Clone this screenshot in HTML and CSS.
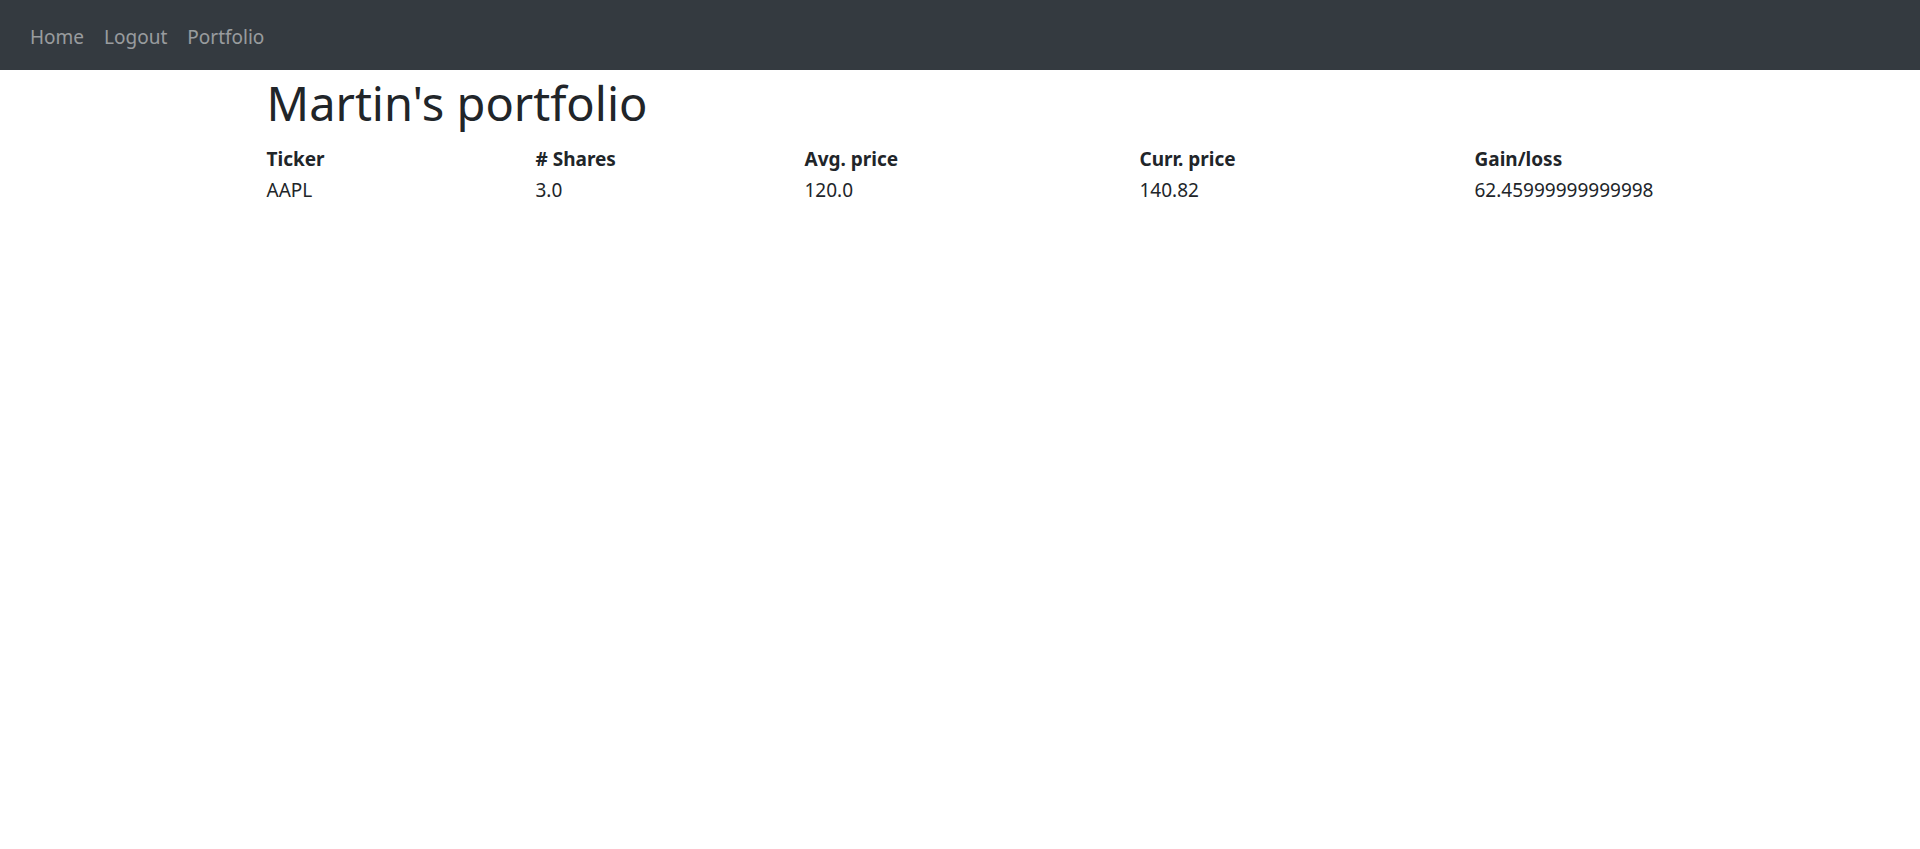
FILE: index.html
```html
<!DOCTYPE html>
<html lang="en">
<head>
<meta charset="utf-8">
<title>Martin's portfolio</title>
<link rel="stylesheet" href="styles.css">
</head>
<body>
<nav class="navbar">
  <a class="nav-link" href="#">Home</a>
  <a class="nav-link" href="#">Logout</a>
  <a class="nav-link" href="#">Portfolio</a>
</nav>
<main class="container">
  <h1 class="title">Martin's portfolio</h1>
  <div class="holdings">
    <div class="cell head">Ticker</div>
    <div class="cell head"># Shares</div>
    <div class="cell head">Avg. price</div>
    <div class="cell head">Curr. price</div>
    <div class="cell head">Gain/loss</div>
    <div class="cell">AAPL</div>
    <div class="cell">3.0</div>
    <div class="cell">120.0</div>
    <div class="cell">140.82</div>
    <div class="cell">62.45999999999998</div>
  </div>
</main>
</body>
</html>
```

FILE: styles.css
```css
html, body {
  margin: 0;
  padding: 0;
}
body {
  font-family: "Noto Sans", "Open Sans", sans-serif;
  color: #212529;
  background: #fff;
  font-size: 19px;
}
.navbar {
  height: 70px;
  background: #343a40;
  display: flex;
  align-items: center;
  padding: 3px 20px 0;
  box-sizing: border-box;
}
.nav-link {
  color: rgba(255, 255, 255, 0.5);
  text-decoration: none;
  padding: 0 10px;
  font-size: 19px;
  line-height: 30px;
}
.container {
  width: 1425px;
  margin: 0 auto;
  padding: 3px 19px 0;
  box-sizing: border-box;
}
.title {
  font-size: 47px;
  font-weight: 400;
  line-height: 60px;
  margin: 0 0 11px;
}
.holdings {
  display: grid;
  grid-template-columns: 269px 269px 335px 335px 1fr;
  grid-auto-rows: 31px;
}
.cell {
  line-height: 31px;
  white-space: nowrap;
}
.head {
  font-weight: 700;
}
```
